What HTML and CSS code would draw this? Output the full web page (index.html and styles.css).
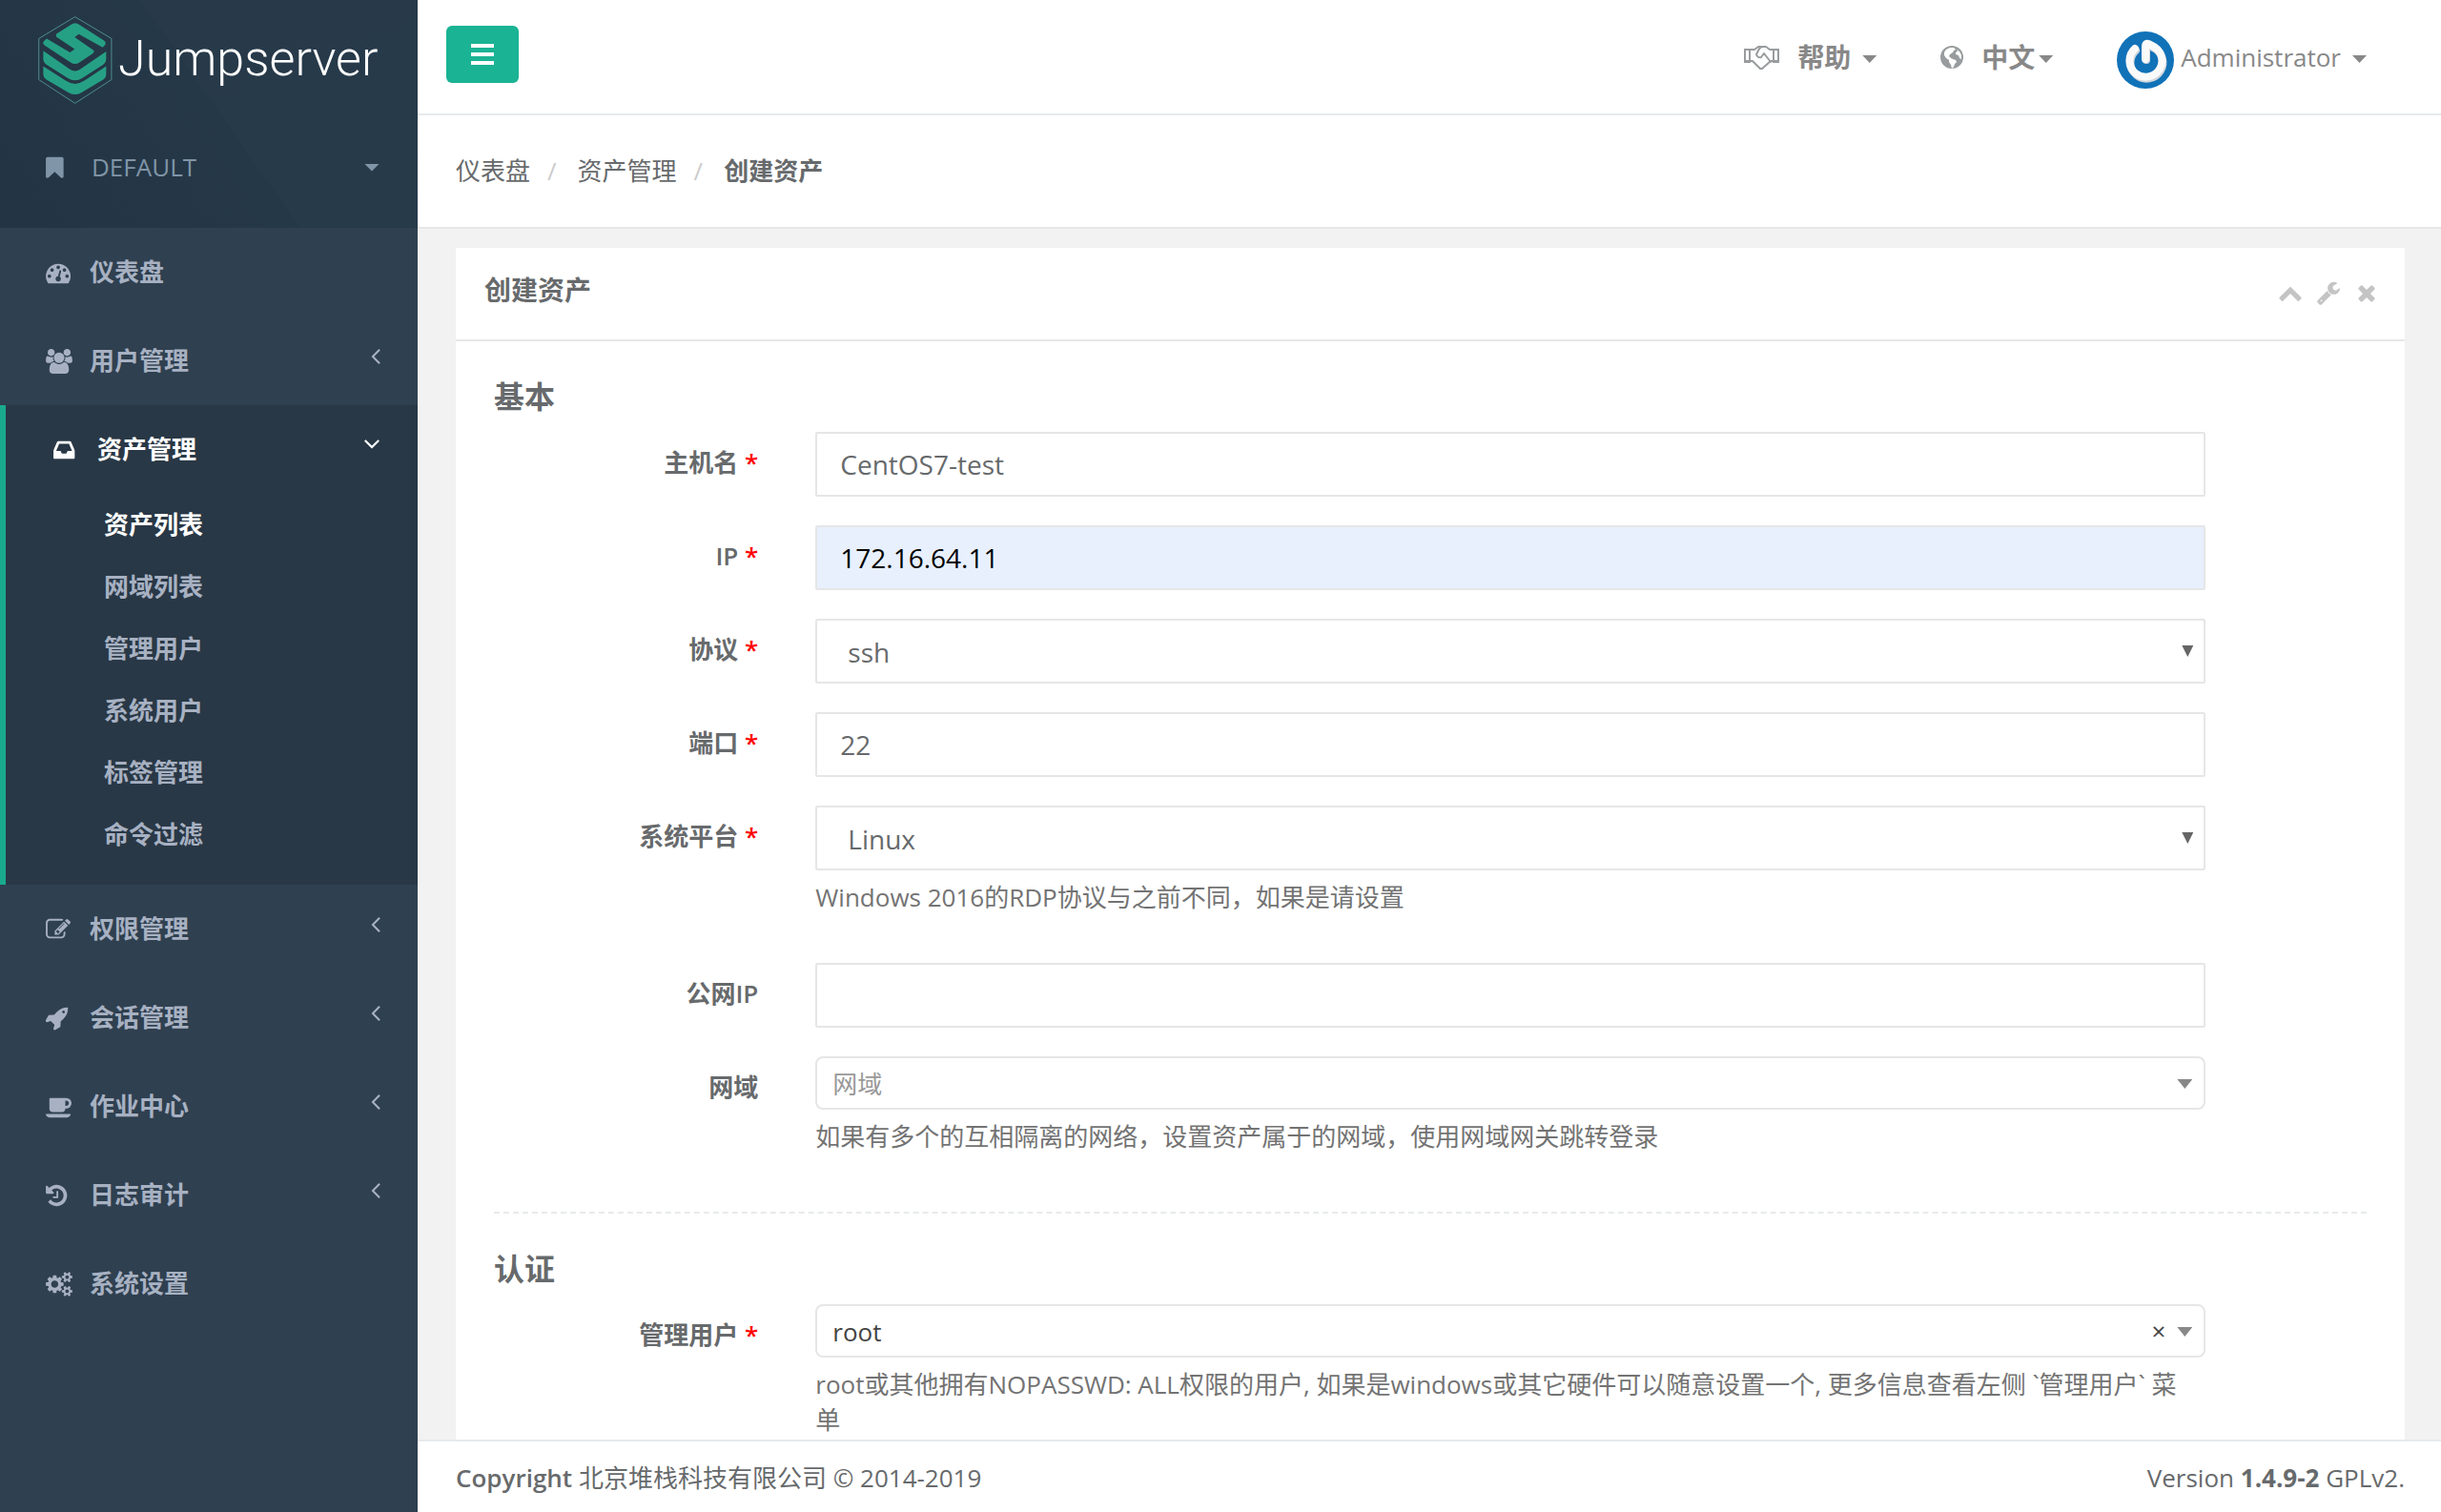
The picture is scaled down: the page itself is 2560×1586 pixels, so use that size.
FILE: index.html
```html
<!DOCTYPE html>
<html lang="zh-CN">
<head>
<meta charset="utf-8">
<title>Jumpserver - 创建资产</title>
<link rel="stylesheet" href="styles.css">
</head>
<body>
<svg class="sprite" aria-hidden="true">
  <symbol id="angle-left" viewBox="582 0 640 1792"><path d="M1203 544q0 13-10 23l-393 393 393 393q10 10 10 23t-10 23l-50 50q-10 10-23 10t-23-10l-466-466q-10-10-10-23t10-23l466-466q10-10 23-10t23 10l50 50q10 10 10 23z"/></symbol>
</svg>
<div class="app">
  <aside class="sidebar">
    <div class="brand-box">
      <a class="brand" href="#">
        <svg class="brand-mark" viewBox="29 19 236 279" aria-hidden="true">
          <path d="M146 21 262 90V221L146 296 31 221V90Z" fill="none" stroke="#4f8f8f" stroke-width="3"/>
          <g fill="#26a085">
            <path d="M146 41 Q154 42 160 46L238 96Q246 102 242 110L234 118 158 76 145 86 206 128Q208 134 202 138L160 166Q146 176 132 166L50 112Q42 106 46 99L56 90 130 134 145 124 86 84V76L130 48Q138 42 146 41Z"/>
            <path d="M45 129 129 187Q146 199 163 187L245 131V156Q245 166 237 172L170 215Q146 231 122 215L54 172Q45 166 45 156Z"/>
            <path d="M45 178 116 224Q146 244 176 224L245 178V204Q245 214 237 220L166 262Q146 274 126 262L54 220Q45 214 45 204Z"/>
          </g>
        </svg>
        <span class="brand-name">Jumpserver</span>
      </a>
      <button class="org" type="button">
        <svg class="icon" viewBox="256 0 1920 1792" aria-hidden="true"><path d="M1420 128q23 0 44 9 33 13 52.500 41t19.500 62v1289q0 34-19.500 62t-52.500 41q-19 8-44 8-48 0-83-32l-441-424-441 424q-36 33-83 33-23 0-44-9-33-13-52.500-41t-19.500-62v-1289q0-34 19.500-62t52.500-41q21-9 44-9h1048z"/></svg>
        <span class="org-name">DEFAULT</span>
        <span class="caret"></span>
      </button>
    </div>
    <nav>
      <ul class="menu">
        <li><a href="#"><svg class="icon" viewBox="0 0 1920 1792" aria-hidden="true"><path d="M384 1152q0-53-37.500-90.500t-90.500-37.500-90.500 37.500-37.500 90.500 37.500 90.500 90.500 37.500 90.500-37.500 37.500-90.500zm192-448q0-53-37.500-90.500t-90.500-37.500-90.500 37.500-37.500 90.500 37.500 90.500 90.500 37.500 90.500-37.500 37.500-90.500zm428 481l101-382q6-26-7.500-48.500t-38.500-29.500-48 6.500-30 39.500l-101 382q-60 5-107 43.500t-63 98.500q-20 77 20 146t117 89 146-20 89-117q16-60-6-117t-72-91zm660-33q0-53-37.500-90.500t-90.500-37.500-90.500 37.500-37.500 90.500 37.500 90.500 90.500 37.500 90.500-37.500 37.500-90.500zm-640-640q0-53-37.500-90.500t-90.500-37.500-90.500 37.500-37.500 90.500 37.500 90.500 90.500 37.500 90.500-37.500 37.500-90.500zm448 192q0-53-37.500-90.500t-90.500-37.500-90.500 37.500-37.500 90.500 37.500 90.500 90.500 37.500 90.500-37.500 37.500-90.500zm320 448q0 261-141 483-19 29-54 29h-1402q-35 0-54-29-141-221-141-483 0-182 71-348t191-286 286-191 348-71 348 71 286 191 191 286 71 348z"/></svg><span>仪表盘</span></a></li>
        <li><a href="#"><svg class="icon" viewBox="0 0 1920 1792" aria-hidden="true"><path d="M593 896q-162 5-265 128h-134q-82 0-138-40.500t-56-118.500q0-353 124-353 6 0 43.500 21t97.500 42.500 119 21.500q67 0 133-23-5 37-5 66 0 139 81 256zm1071 637q0 120-73 189.500t-194 69.500h-874q-121 0-194-69.500t-73-189.500q0-53 3.500-103.500t14-109 26.500-108.500 43-97.500 62-81 85.500-53.500 111.500-20q10 0 43 21.500t73 48 107 48 135 21.500 135-21.500 107-48 73-48 43-21.500q61 0 111.500 20t85.500 53.500 62 81 43 97.500 26.500 108.500 14 109 3.500 103.500zm-1024-1277q0 106-75 181t-181 75-181-75-75-181 75-181 181-75 181 75 75 181zm704 384q0 159-112.500 271.500t-271.500 112.500-271.500-112.500-112.500-271.500 112.500-271.500 271.500-112.500 271.500 112.500 112.500 271.500zm576 225q0 78-56 118.500t-138 40.500h-134q-103-123-265-128 81-117 81-256 0-29-5-66 66 23 133 23 59 0 119-21.500t97.500-42.500 43.500-21q124 0 124 353zm-128-609q0 106-75 181t-181 75-181-75-75-181 75-181 181-75 181 75 75 181z"/></svg><span>用户管理</span><svg class="arrow" aria-hidden="true"><use href="#angle-left"/></svg></a></li>
        <li class="active">
          <a href="#"><svg class="icon" viewBox="128 0 1920 1792" aria-hidden="true"><path d="M1151 960h316q-1-3-2.500-8t-2.500-8l-212-496h-708l-212 496q-1 2-2.500 8t-2.500 8h316l95 192h320zm513 30v482q0 26-19 45t-45 19h-1408q-26 0-45-19t-19-45v-482q0-62 25-123l238-552q10-25 36.500-42t52.500-17h832q26 0 52.500 17t36.500 42l238 552q25 61 25 123z"/></svg><span>资产管理</span><svg class="arrow open" aria-hidden="true"><use href="#angle-left"/></svg></a>
          <ul class="submenu">
            <li><a class="current" href="#">资产列表</a></li>
            <li><a href="#">网域列表</a></li>
            <li><a href="#">管理用户</a></li>
            <li><a href="#">系统用户</a></li>
            <li><a href="#">标签管理</a></li>
            <li><a href="#">命令过滤</a></li>
          </ul>
        </li>
        <li><a href="#"><svg class="icon" viewBox="0 0 1920 1792" aria-hidden="true"><path d="M888 1184l116-116-152-152-116 116v56h96v96h56zm440-720q-16-16-33 1l-350 350q-17 17-1 33t33-1l350-350q17-17 1-33zm80 594v190q0 119-84.500 203.500t-203.500 84.500h-832q-119 0-203.500-84.500t-84.500-203.500v-832q0-119 84.500-203.500t203.500-84.500h832q63 0 117 25 15 7 18 23 3 17-9 29l-49 49q-14 14-32 8-23-6-45-6h-832q-66 0-113 47t-47 113v832q0 66 47 113t113 47h832q66 0 113-47t47-113v-126q0-13 9-22l64-64q15-15 35-7t20 29zm-96-738l288 288-672 672h-288v-288zm444 132l-92 92-288-288 92-92q28-28 68-28t68 28l152 152q28 28 28 68t-28 68z"/></svg><span>权限管理</span><svg class="arrow" aria-hidden="true"><use href="#angle-left"/></svg></a></li>
        <li><a href="#"><svg class="icon" viewBox="64 0 1920 1792" aria-hidden="true"><path d="M1440 448q0-40-28-68t-68-28-68 28-28 68 28 68 68 28 68-28 28-68zm224-288q0 249-75.500 430.500t-253.500 360.500q-81 80-195 176l-20 379q-2 16-16 26l-384 224q-7 4-16 4-12 0-23-9l-64-64q-13-14-8-32l85-276-281-281-276 85q-3 1-9 1-14 0-23-9l-64-64q-17-19-5-39l224-384q10-14 26-16l379-20q96-114 176-195 188-187 358-258t431-71q14 0 24 9.500t10 22.500z"/></svg><span>会话管理</span><svg class="arrow" aria-hidden="true"><use href="#angle-left"/></svg></a></li>
        <li><a href="#"><svg class="icon" viewBox="0 0 1920 1792" aria-hidden="true"><path d="M1664 640q0-80-56-136t-136-56h-64v384h64q80 0 136-56t56-136zm-1664 768h1792q0 106-75 181t-181 75h-1280q-106 0-181-75t-75-181zm1856-768q0 159-112.500 271.500t-271.500 112.500h-64v32q0 92-66 158t-158 66h-704q-92 0-158-66t-66-158v-736q0-26 19-45t45-19h1152q159 0 271.500 112.500t112.500 271.500z"/></svg><span>作业中心</span><svg class="arrow" aria-hidden="true"><use href="#angle-left"/></svg></a></li>
        <li><a href="#"><svg class="icon" viewBox="128 0 1920 1792" aria-hidden="true"><path d="M1664 896q0 156-61 298t-164 245-245 164-298 61q-172 0-327-72.500t-264-204.500q-7-10-6.500-22.500t8.500-20.500l137-138q10-9 25-9 16 2 23 12 73 95 179 147t225 52q104 0 198.500-40.500t163.500-109.500 109.500-163.500 40.500-198.500-40.500-198.500-109.500-163.500-163.500-109.500-198.500-40.500q-98 0-188 35.500t-160 101.500l137 138q31 30 14 69-17 40-59 40h-448q-26 0-45-19t-19-45v-448q0-42 40-59 39-17 69 14l130 129q107-101 244.500-156.500t284.500-55.500q156 0 298 61t245 164 164 245 61 298zm-640-288v448q0 14-9 23t-23 9h-320q-14 0-23-9t-9-23v-64q0-14 9-23t23-9h224v-352q0-14 9-23t23-9h64q14 0 23 9t9 23z"/></svg><span>日志审计</span><svg class="arrow" aria-hidden="true"><use href="#angle-left"/></svg></a></li>
        <li><a href="#"><svg class="icon" viewBox="0 0 1920 1792" aria-hidden="true"><path d="M896 896q0-106-75-181t-181-75-181 75-75 181 75 181 181 75 181-75 75-181zm768 512q0-52-38-90t-90-38-90 38-38 90q0 53 37.500 90.500t90.500 37.500 90.500-37.500 37.500-90.500zm0-1024q0-52-38-90t-90-38-90 38-38 90q0 53 37.500 90.500t90.500 37.500 90.500-37.500 37.500-90.500zm-384 421v185q0 10-7 19.500t-16 10.500l-155 24q-11 35-32 76 34 48 90 115 7 11 7 20 0 12-7 19-23 30-82.500 89.500t-78.500 59.500q-11 0-21-7l-115-90q-37 19-77 31-11 108-23 155-7 24-30 24h-186q-11 0-20-7.500t-10-17.500l-23-153q-34-10-75-31l-118 89q-7 7-20 7-11 0-21-8-144-133-144-160 0-9 7-19 10-14 41-53t47-61q-23-44-35-82l-152-24q-10-1-17-9.500t-7-19.500v-185q0-10 7-19.500t16-10.500l155-24q11-35 32-76-34-48-90-115-7-11-7-20 0-12 7-20 22-30 82-89t79-59q11 0 21 7l115 90q34-18 77-32 11-108 23-154 7-24 30-24h186q11 0 20 7.500t10 17.500l23 153q34 10 75 31l118-89q8-7 20-7 11 0 21 8 144 133 144 160 0 8-7 19-12 16-42 54t-45 60q23 48 34 82l152 23q10 2 17 10.500t7 19.500zm640 533v140q0 16-149 31-12 27-30 52 51 113 51 138 0 4-4 7-122 71-124 71-8 0-46-47t-52-68q-20 2-30 2t-30-2q-14 21-52 68t-46 47q-2 0-124-71-4-3-4-7 0-25 51-138-18-25-30-52-149-15-149-31v-140q0-16 149-31 13-29 30-52-51-113-51-138 0-4 4-7 4-2 35-20t59-34 30-16q8 0 46 46.500t52 67.500q20-2 30-2t30 2q51-71 92-112l6-2q4 0 124 70 4 3 4 7 0 25-51 138 17 23 30 52 149 15 149 31zm0-1024v140q0 16-149 31-12 27-30 52 51 113 51 138 0 4-4 7-122 71-124 71-8 0-46-47t-52-68q-20 2-30 2t-30-2q-14 21-52 68t-46 47q-2 0-124-71-4-3-4-7 0-25 51-138-18-25-30-52-149-15-149-31v-140q0-16 149-31 13-29 30-52-51-113-51-138 0-4 4-7 4-2 35-20t59-34 30-16q8 0 46 46.500t52 67.500q20-2 30-2t30 2q51-71 92-112l6-2q4 0 124 70 4 3 4 7 0 25-51 138 17 23 30 52 149 15 149 31z"/></svg><span>系统设置</span></a></li>
      </ul>
    </nav>
  </aside>

  <div class="page">
    <header class="topbar">
      <button class="toggle" type="button" aria-label="菜单"><svg width="24" height="22" viewBox="0 0 24 22" aria-hidden="true"><path d="M0 0h24v4H0zM0 9h24v4H0zM0 18h24v4H0z"/></svg></button>
      <nav class="top-links">
        <a class="top-link" href="#">
          <svg class="handshake" width="37" height="26" viewBox="0 0 37 26" aria-hidden="true"><g fill="none" stroke="currentColor" stroke-width="2" stroke-linejoin="round" stroke-linecap="round"><path d="M6 5h5l4-3h4M6 17h3l8 8h2l9-8h3M31 5h-4l-4-3h-3q-3 0-5 4l-2 4q1 4 5 3l3-4 7 9"/></g><path fill="currentColor" fill-rule="evenodd" d="M0 4h7v15H0zM2 6v10h3V6zM30 4h7v15h-7zM32 6v10h3V6z"/></svg>
          <strong>帮助</strong><span class="caret spaced"></span>
        </a>
        <a class="top-link lang" href="#">
          <svg class="globe" width="24" height="24" viewBox="0 0 24 24" aria-hidden="true"><circle cx="12" cy="12" r="12" fill="currentColor"/><path fill="#fff" d="M10 2l4 0 2 2-2 1-1 2-3 2-1 2 2 2 2 1 3 1 1 2-2 2-1 3-2 2-1-4-2-3 0-2-3-2-2-3 0-3 2-3zM17 4l3 2 2 4 0 4-2-1-1-3-3-1 0-2 2-1z"/></svg>
          <strong>中文</strong><span class="caret"></span>
        </a>
        <a class="top-link user" href="#">
          <svg class="avatar" width="60" height="60" viewBox="0 0 60 60" aria-hidden="true"><circle cx="30" cy="30" r="30" fill="#1172b8"/><path d="M19 19a17 17 0 1 0 18-3Q30 10 30 16v13" fill="none" stroke="#cfd6dc" stroke-width="8" stroke-linecap="round" transform="translate(1 1)"/><path d="M19 18a17 17 0 1 0 18-3Q30 10 30 16v13" fill="none" stroke="#fafafa" stroke-width="8" stroke-linecap="round" stroke-linejoin="round"/></svg>
          <span>Administrator</span><span class="caret spaced"></span>
        </a>
      </nav>
    </header>

    <ol class="breadcrumb">
      <li><a href="#">仪表盘</a></li>
      <li><a href="#">资产管理</a></li>
      <li><strong>创建资产</strong></li>
    </ol>

    <main class="content">
      <section class="panel">
        <div class="panel-head">
          <h5>创建资产</h5>
          <div class="tools">
            <button type="button" aria-label="收起"><svg viewBox="0 0 1792 1792" aria-hidden="true"><path d="M1683 1331l-166 165q-19 19-45 19t-45-19l-531-531-531 531q-19 19-45 19t-45-19l-166-165q-19-19-19-45.500t19-45.500l742-741q19-19 45-19t45 19l742 741q19 19 19 45.500t-19 45.500z"/></svg></button>
            <button type="button" aria-label="设置"><svg viewBox="0 0 1792 1792" aria-hidden="true"><path d="M448 1472q0-26-19-45t-45-19-45 19-19 45 19 45 45 19 45-19 19-45zm644-420l-682 682q-37 37-90 37-52 0-91-37l-106-108q-38-36-38-90 0-53 38-91l681-681q39 98 114.500 173.500t173.500 114.500zm634-435q0 39-23 106-47 134-164.500 217.500t-258.500 83.500q-185 0-316.500-131.500t-131.500-316.500 131.500-316.500 316.500-131.500q58 0 121.500 16.500t107.500 46.500q16 11 16 28t-16 28l-293 169v224l193 107q5-3 79-48.500t135.500-81 70.500-35.500q15 0 23.500 10t8.500 25z"/></svg></button>
            <button type="button" aria-label="关闭"><svg viewBox="0 0 1792 1792" aria-hidden="true"><path d="M1490 1322q0 40-28 68l-136 136q-28 28-68 28t-68-28l-294-294-294 294q-28 28-68 28t-68-28l-136-136q-28-28-28-68t28-68l294-294-294-294q-28-28-28-68t28-68l136-136q28-28 68-28t68 28l294 294 294-294q28-28 68-28t68 28l136 136q28 28 28 68t-28 68l-294 294 294 294q28 28 28 68z"/></svg></button>
          </div>
        </div>
        <form class="panel-body">
          <h3>基本</h3>
          <div class="row">
            <label for="hostname">主机名 <span class="req">*</span></label>
            <div><input class="control" id="hostname" type="text" value="CentOS7-test"></div>
          </div>
          <div class="row">
            <label for="ip">IP <span class="req">*</span></label>
            <div><input class="control filled" id="ip" type="text" value="172.16.64.11"></div>
          </div>
          <div class="row">
            <label for="protocol">协议 <span class="req">*</span></label>
            <div class="pick"><select class="control" id="protocol"><option>ssh</option></select></div>
          </div>
          <div class="row">
            <label for="port">端口 <span class="req">*</span></label>
            <div><input class="control" id="port" type="text" value="22"></div>
          </div>
          <div class="row">
            <label for="platform">系统平台 <span class="req">*</span></label>
            <div class="pick"><select class="control" id="platform"><option>Linux</option></select>
              <p class="help">Windows 2016的RDP协议与之前不同，如果是请设置</p></div>
          </div>
          <div class="row">
            <label for="public-ip">公网IP</label>
            <div><input class="control" id="public-ip" type="text"></div>
          </div>
          <div class="row">
            <label for="domain">网域</label>
            <div class="pick soft"><select class="control empty" id="domain"><option>网域</option></select>
              <p class="help">如果有多个的互相隔离的网络，设置资产属于的网域，使用网域网关跳转登录</p></div>
          </div>
          <hr>
          <h3>认证</h3>
          <div class="row">
            <label for="admin-user">管理用户 <span class="req">*</span></label>
            <div class="pick soft"><select class="control" id="admin-user"><option>root</option></select>
              <button class="clear" type="button" aria-label="清除">×</button>
              <p class="help">root或其他拥有NOPASSWD: ALL权限的用户, 如果是windows或其它硬件可以随意设置一个, 更多信息查看左侧 `管理用户` 菜单</p></div>
          </div>
        </form>
      </section>
    </main>

    <footer class="footer">
      <div><strong>Copyright</strong> 北京堆栈科技有限公司 © 2014-2019</div>
      <div>Version <b>1.4.9-2</b> GPLv2.</div>
    </footer>
  </div>
</div>
</body>
</html>
```
FILE: styles.css
```css
* { box-sizing: border-box; }
body {
  margin: 0;
  font: 26px/37px "Open Sans", "Noto Sans CJK SC", sans-serif;
  color: #676a6c;
  background: #f2f2f2;
}
a { color: inherit; text-decoration: none; }
ul, ol { margin: 0; padding: 0; list-style: none; }
button, input, select { font: inherit; color: inherit; }
button { border: 0; padding: 0; background: none; }
strong { font-weight: 600; }
.sprite { display: none; }

.app { display: flex; height: 100vh; overflow: hidden; }

/* Sidebar */
.sidebar { flex: none; width: 438px; background: #2f4050; color: #a7b1c2; }
.brand-box {
  height: 239px;
  padding: 17px 40px 0;
  background:
    linear-gradient(55deg, #233544 0%, #253847 52%, transparent 52%),
    linear-gradient(160deg, #283a4a, #263a4a);
}
.brand { display: flex; align-items: center; gap: 6px; height: 92px; }
.brand-mark { width: 78px; height: 92px; }
.brand-name { padding-bottom: 2px; color: #fff; font: 300 52px/60px Roboto, sans-serif; }
.org {
  display: flex;
  align-items: center;
  width: 100%;
  height: 37px;
  margin-top: 48px;
  padding-left: 8px;
  color: #8095a8;
  text-align: left;
}
.org-name { flex: 1; margin-left: 20px; }
.caret {
  width: 16px;
  height: 8px;
  background: currentColor;
  clip-path: polygon(0 0, 100% 0, 50% 100%);
}
.icon { width: 28px; height: 26px; flex: none; fill: currentColor; }
.menu > li > a {
  display: flex;
  align-items: center;
  height: 93px;
  padding: 0 39px 0 48px;
  font-weight: 600;
}
.menu .icon + span { flex: 1; margin-left: 18px; }
.arrow { width: 10px; height: 28px; margin-bottom: 12px; fill: currentColor; }
.arrow.open { transform: rotate(-90deg); margin-right: 5px; }
.menu > .active { border-left: 6px solid #19aa8d; background: #293846; padding-bottom: 20px; }
.menu > .active > a { padding-left: 50px; color: #fff; }
.submenu a {
  display: block;
  padding: 14px 0 14px 103px;
  font-weight: 600;
}
.submenu .current { color: #fff; }

/* Page column */
.page { flex: 1; min-width: 0; display: flex; flex-direction: column; }
.topbar {
  flex: none;
  display: flex;
  justify-content: space-between;
  align-items: flex-start;
  height: 121px;
  padding: 27px 78px 0 30px;
  background: #fff;
  border-bottom: 2px solid #e7eaec;
}
.toggle {
  display: grid;
  place-items: center;
  width: 76px;
  height: 60px;
  border-radius: 6px;
  background: #1ab394;
  fill: #fff;
}
.top-links { display: flex; align-items: center; height: 66px; color: #888; }
.top-link { display: flex; align-items: center; }
.top-link strong { font-size: 28px; }
.top-link .caret { width: 15px; margin: 4px 0 0 4px; }
.top-link .caret.spaced { margin-left: 12px; }
.handshake, .globe { margin-right: 19px; color: #999c9e; }
.lang { margin-left: 67px; }
.user { margin-left: 67px; }
.avatar { margin: 6px 7px 0 0; }

.breadcrumb {
  flex: none;
  display: flex;
  align-items: center;
  height: 119px;
  padding: 0 40px;
  background: #fff;
  border-bottom: 2px solid #e7e7e7;
}
.breadcrumb li + li::before { content: "/"; margin: 0 22px 0 18px; color: #ccc; }

.content { flex: 1; min-height: 0; overflow: hidden; padding: 20px 38px 0 40px; }
.panel { background: #fff; }
.panel-head {
  display: flex;
  justify-content: space-between;
  align-items: center;
  height: 98px;
  padding: 0 27px 8px 30px;
  border-bottom: 2px solid #e7e7e7;
}
.panel-head h5 { margin: 0; font-size: 28px; font-weight: 600; }
.tools { display: flex; gap: 14px; padding-top: 6px; }
.tools svg { display: block; width: 26px; height: 26px; fill: #c4c4c4; }
.panel-body { padding: 38px 40px 40px; }
h3 { margin: 0 0 18px; font-size: 32px; line-height: 39px; font-weight: 600; }

/* Form rows: label, field, free space */
.row {
  display: grid;
  grid-template-columns: 2fr 9fr 1fr;
  align-items: start;
  margin: 0 -30px 30px;
}
.row label { padding: 14px 30px 0; text-align: right; font-weight: 600; }
.row > div { position: relative; margin: 0 30px; }
.req { color: #f00; }
.control {
  display: block;
  width: 100%;
  height: 68px;
  padding: 0 24px;
  border: 2px solid #e5e6e7;
  border-radius: 2px;
  background: #fff;
  font-size: 28px;
  appearance: none;
}
.control.filled { background: #e8f0fe; color: #000; }
.pick .control { padding: 2px 32px 0; }
.pick::after {
  content: "";
  position: absolute;
  top: 28px;
  right: 13px;
  width: 12px;
  height: 12px;
  background: #666;
  clip-path: polygon(0 0, 100% 0, 50% 100%);
}
.soft .control { height: 56px; padding-left: 16px; border-radius: 8px; font-size: 26px; color: #444; }
.soft .control.empty { color: #999; }
.soft::after { top: 24px; right: 14px; width: 16px; height: 10px; background: #888; }
.clear { position: absolute; top: 10px; right: 42px; color: #444; }
.help { margin: 10px 0 50px; padding-right: 12px; color: #737373; }
.row:has(.help) { margin-bottom: 0; }
hr { margin: 10px 0 38px; border: 0; border-top: 2px dashed #e7eaec; }

.footer {
  flex: none;
  display: flex;
  justify-content: space-between;
  align-items: center;
  height: 76px;
  padding: 2px 38px 0 40px;
  background: #fff;
  border-top: 2px solid #e7eaec;
}
```
